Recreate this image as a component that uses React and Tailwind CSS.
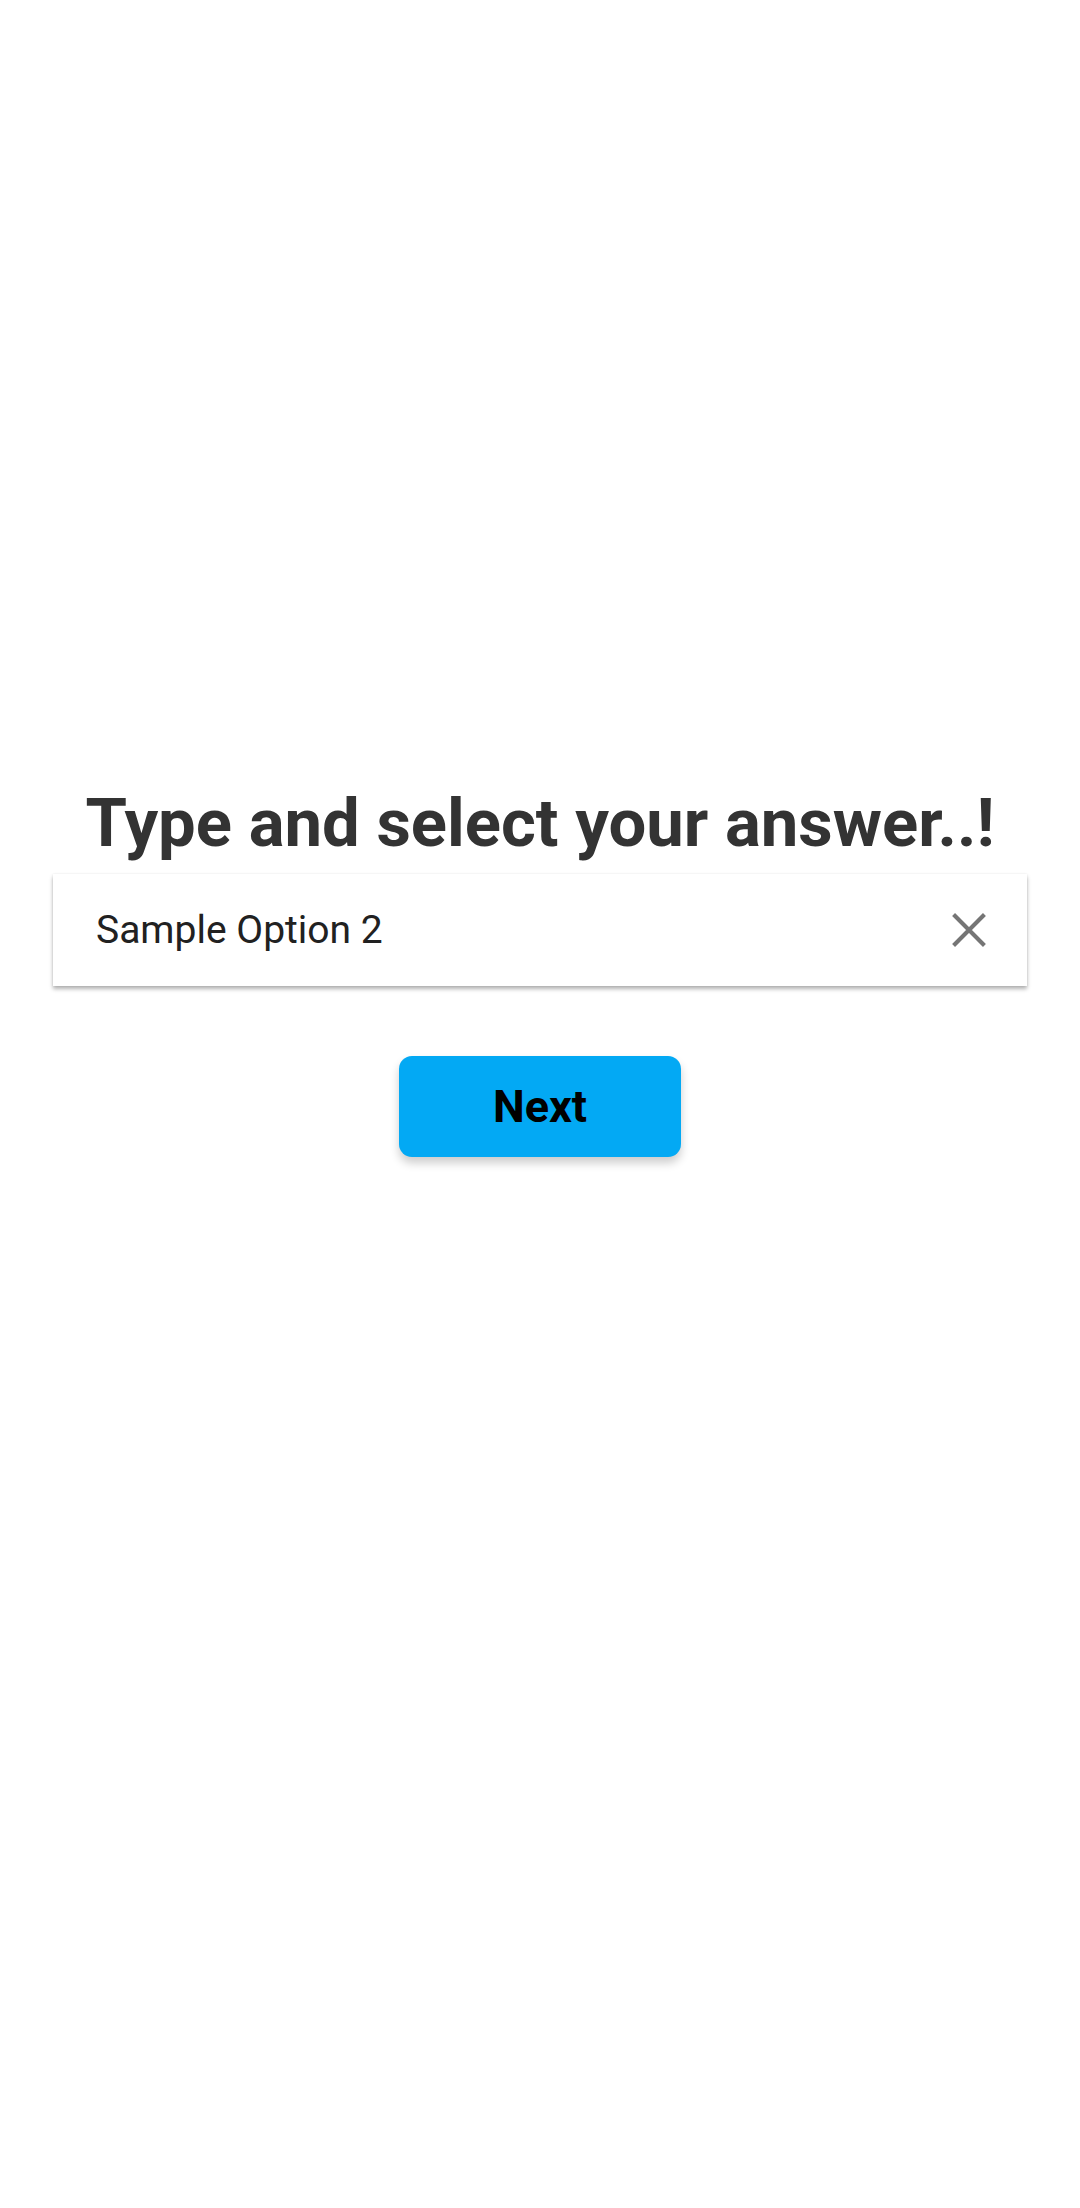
import React, { useState } from "react";

const App = () => {
  const [value, setValue] = useState("Sample Option 2");

  return (
    <div
      className="min-h-screen bg-white flex flex-col items-center"
      style={{ fontFamily: "Roboto, 'Noto Sans', sans-serif" }}
    >
      <h1 className="mt-[783px] text-[67px] leading-[80px] font-bold text-[#333333] text-center">
        Type and select your answer..!
      </h1>

      {/* answer input */}
      <div className="mt-[11px] w-[974px] h-[112px] bg-white flex items-center pl-[43px] pr-[40px] shadow-[0_3px_4px_rgba(0,0,0,0.3),0_0_2px_rgba(0,0,0,0.08)]">
        <input
          value={value}
          onChange={(e) => setValue(e.target.value)}
          className="flex-1 bg-transparent outline-none text-[39px] text-[#212121]"
        />
        <button onClick={() => setValue("")} className="w-[36px] h-[36px] flex items-center justify-center">
          <svg width="36" height="36" viewBox="0 0 14 14">
            <path d="M1 1L13 13M13 1L1 13" stroke="#757575" strokeWidth="1.6" fill="none" />
          </svg>
        </button>
      </div>

      <button className="mt-[70px] w-[282px] h-[101px] rounded-[13px] bg-[#03a9f4] text-black text-[45px] font-bold shadow-[0_6px_10px_rgba(0,0,0,0.2)]">
        Next
      </button>
    </div>
  );
};

export default App;
